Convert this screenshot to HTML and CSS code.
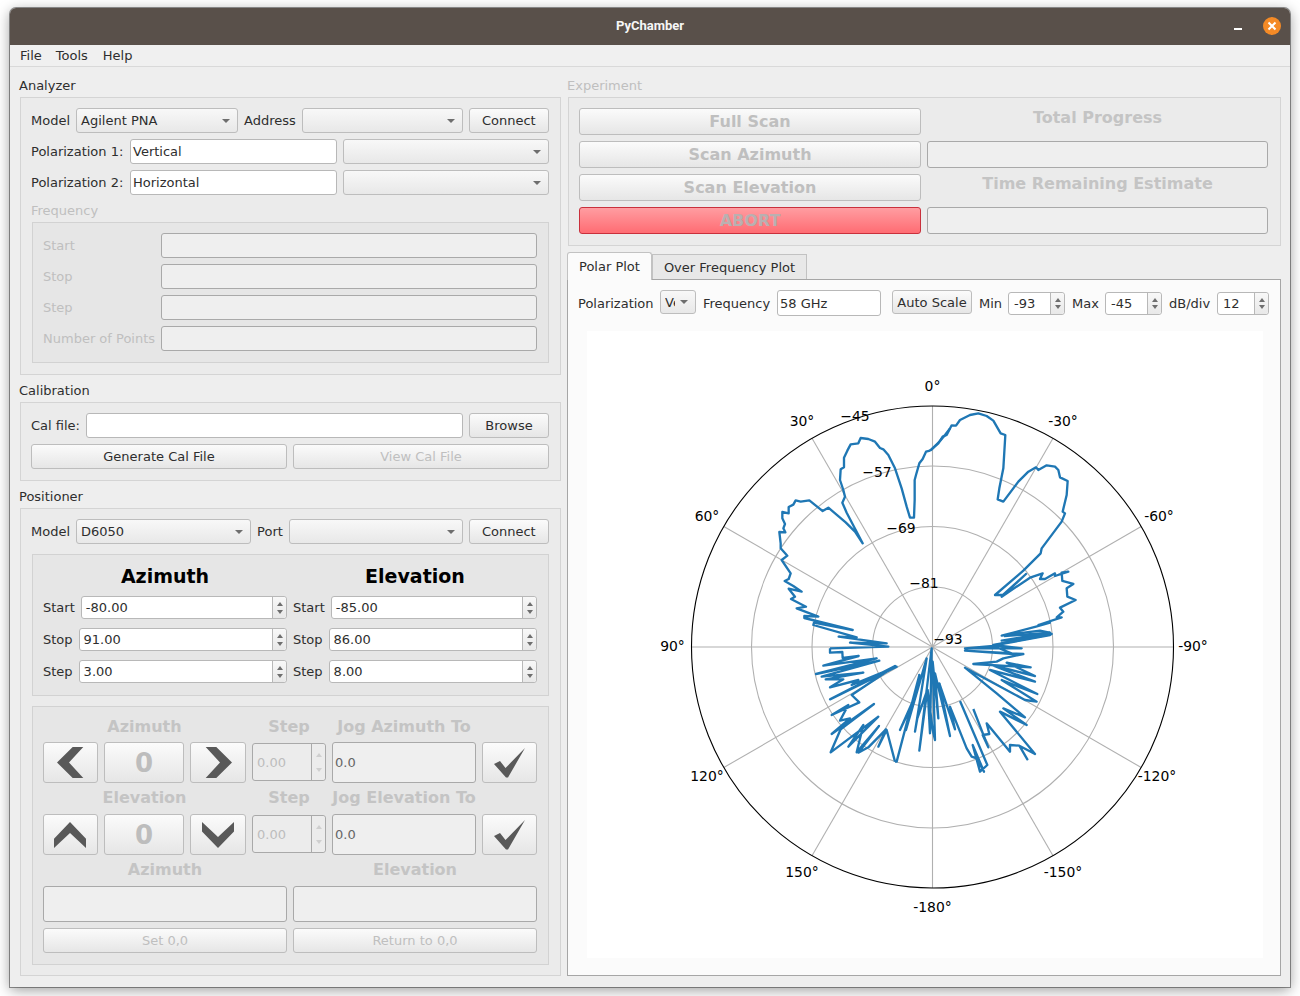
FILE: index.html
```html
<!DOCTYPE html>
<html lang="en">
<head>
    <meta charset="UTF-8">
    <title>PyChamber</title>
    <link rel="stylesheet" href="styles.css">
</head>
<body>

<div class="window">
    <div class="titlebar">
        <span class="title">PyChamber</span>
        <span class="minimize"></span>
        <span class="close">
            <svg width="10" height="10" viewBox="0 0 10 10"><path d="M1.5 1.5L8.5 8.5M8.5 1.5L1.5 8.5" stroke="#fff" stroke-width="2"/></svg>
        </span>
    </div>
    <div class="menubar">
        <span>File</span>
        <span>Tools</span>
        <span>Help</span>
    </div>

    <div class="main">
        <!-- left column -->
        <div class="col-left">
            <div class="group-title">Analyzer</div>
            <div class="box box-analyzer">
                <div class="row">
                    <span class="lbl">Model</span>
                    <div class="combo w162">Agilent PNA<i class="arrow"></i></div>
                    <span class="lbl">Address</span>
                    <div class="combo w161"><i class="arrow"></i></div>
                    <div class="btn w80">Connect</div>
                </div>
                <div class="row">
                    <span class="lbl pol">Polarization 1:</span>
                    <div class="field w207">Vertical</div>
                    <div class="combo grow"><i class="arrow"></i></div>
                </div>
                <div class="row">
                    <span class="lbl pol">Polarization 2:</span>
                    <div class="field w207">Horizontal</div>
                    <div class="combo grow"><i class="arrow"></i></div>
                </div>
                <div class="sub-title off">Frequency</div>
                <div class="frame freq">
                    <div class="freq-row"><span class="lbl off">Start</span><div class="field dis grow"></div></div>
                    <div class="freq-row"><span class="lbl off">Stop</span><div class="field dis grow"></div></div>
                    <div class="freq-row"><span class="lbl off">Step</span><div class="field dis grow"></div></div>
                    <div class="freq-row"><span class="lbl off">Number of Points</span><div class="field dis grow"></div></div>
                </div>
            </div>

            <div class="group-title next">Calibration</div>
            <div class="box box-cal">
                <div class="row">
                    <span class="lbl">Cal file:</span>
                    <div class="field grow"></div>
                    <div class="btn w80">Browse</div>
                </div>
                <div class="row">
                    <div class="btn half">Generate Cal File</div>
                    <div class="btn half off">View Cal File</div>
                </div>
            </div>

            <div class="group-title next">Positioner</div>
            <div class="box box-pos">
                <div class="row">
                    <span class="lbl">Model</span>
                    <div class="combo w175">D6050<i class="arrow"></i></div>
                    <span class="lbl">Port</span>
                    <div class="combo w174"><i class="arrow"></i></div>
                    <div class="btn w80">Connect</div>
                </div>

                <div class="frame scan">
                    <div class="scan-grid">
                        <div class="axis-title">Azimuth</div>
                        <div class="axis-title">Elevation</div>
                        <div class="spin-row"><span class="lbl">Start</span><div class="spin">-80.00<span class="spin-btns"><i class="up"></i><i class="down"></i></span></div></div>
                        <div class="spin-row"><span class="lbl">Start</span><div class="spin">-85.00<span class="spin-btns"><i class="up"></i><i class="down"></i></span></div></div>
                        <div class="spin-row"><span class="lbl">Stop</span><div class="spin">91.00<span class="spin-btns"><i class="up"></i><i class="down"></i></span></div></div>
                        <div class="spin-row"><span class="lbl">Stop</span><div class="spin">86.00<span class="spin-btns"><i class="up"></i><i class="down"></i></span></div></div>
                        <div class="spin-row"><span class="lbl">Step</span><div class="spin">3.00<span class="spin-btns"><i class="up"></i><i class="down"></i></span></div></div>
                        <div class="spin-row"><span class="lbl">Step</span><div class="spin">8.00<span class="spin-btns"><i class="up"></i><i class="down"></i></span></div></div>
                    </div>
                </div>

                <div class="frame jog">
                    <div class="jog-grid">
                        <div class="jog-lbl span3">Azimuth</div>
                        <div class="jog-lbl">Step</div>
                        <div class="jog-lbl span2">Jog Azimuth To</div>

                        <div class="btn icon nudge"><svg width="27" height="31" viewBox="0 0 27 31"><polygon points="15.7,0 26.3,0 12,15.5 26.3,31 15.7,31 0,15.5"/></svg></div>
                        <div class="btn big">0</div>
                        <div class="btn icon"><svg width="27" height="31" viewBox="0 0 27 31"><polygon points="0.7,0 11.3,0 27,15.5 11.3,31 0.7,31 15,15.5"/></svg></div>
                        <div class="spin dis">0.00<span class="spin-btns"><i class="up"></i><i class="down"></i></span></div>
                        <div class="field dis jog-to">0.0</div>
                        <div class="btn icon nudge"><svg width="31" height="30" viewBox="0 0 31 30"><polygon points="0,16 6,13 11.5,20 31,0 14,29.5 12,29.5"/></svg></div>

                        <div class="jog-lbl span3">Elevation</div>
                        <div class="jog-lbl">Step</div>
                        <div class="jog-lbl span2">Jog Elevation To</div>

                        <div class="btn icon nudge"><svg width="32" height="26" viewBox="0 0 32 26"><polygon points="16,0 32,16.7 32,26 16,11 0,26 0,16.7"/></svg></div>
                        <div class="btn big">0</div>
                        <div class="btn icon"><svg width="32" height="26" viewBox="0 0 32 26"><polygon points="0,0 16,15 32,0 32,9.5 16,26 0,9.5"/></svg></div>
                        <div class="spin dis">0.00<span class="spin-btns"><i class="up"></i><i class="down"></i></span></div>
                        <div class="field dis jog-to">0.0</div>
                        <div class="btn icon nudge"><svg width="31" height="30" viewBox="0 0 31 30"><polygon points="0,16 6,13 11.5,20 31,0 14,29.5 12,29.5"/></svg></div>
                    </div>
                    <div class="pos-grid">
                        <div class="jog-lbl">Azimuth</div>
                        <div class="jog-lbl">Elevation</div>
                        <div class="field dis readout"></div>
                        <div class="field dis readout"></div>
                        <div class="btn off">Set 0,0</div>
                        <div class="btn off">Return to 0,0</div>
                    </div>
                </div>
            </div>
        </div>

        <!-- right column -->
        <div class="col-right">
            <div class="group-title off">Experiment</div>
            <div class="box box-exp">
                <div class="exp-grid">
                    <div class="btn scan-btn">Full Scan</div>
                    <div class="exp-lbl">Total Progress</div>
                    <div class="btn scan-btn">Scan Azimuth</div>
                    <div class="progress"></div>
                    <div class="btn scan-btn">Scan Elevation</div>
                    <div class="exp-lbl">Time Remaining Estimate</div>
                    <div class="btn scan-btn abort">ABORT</div>
                    <div class="progress"></div>
                </div>
            </div>

            <div class="tabs">
                <div class="tab active">Polar Plot</div>
                <div class="tab">Over Frequency Plot</div>
            </div>
            <div class="pane">
                <div class="toolbar">
                    <span class="lbl w75">Polarization</span>
                    <div class="combo pol-combo"><span class="clip">Ve</span><i class="arrow"></i></div>
                    <span class="lbl w67">Frequency</span>
                    <div class="field freq-in">58 GHz</div>
                    <div class="btn auto">Auto Scale</div>
                    <span class="lbl w22">Min</span>
                    <div class="spin small w57">-93<span class="spin-btns"><i class="up"></i><i class="down"></i></span></div>
                    <span class="lbl w26">Max</span>
                    <div class="spin small w57">-45<span class="spin-btns"><i class="up"></i><i class="down"></i></span></div>
                    <span class="lbl w41">dB/div</span>
                    <div class="spin small w52">12<span class="spin-btns"><i class="up"></i><i class="down"></i></span></div>
                </div>

                <svg class="plot" width="676" height="627" viewBox="587 331 676 627">
                    <g class="grid">
                        <circle cx="932.5" cy="647" r="60"/>
                        <circle cx="932.5" cy="647" r="120.5"/>
                        <circle cx="932.5" cy="647" r="181"/>
                        <line x1="932.5" y1="406" x2="932.5" y2="888"/>
                        <line x1="692" y1="647" x2="1173" y2="647"/>
                        <line x1="812" y1="438.3" x2="1053" y2="855.7"/>
                        <line x1="1053" y1="438.3" x2="812" y2="855.7"/>
                        <line x1="723.8" y1="526.5" x2="1141.2" y2="767.5"/>
                        <line x1="1141.2" y1="526.5" x2="723.8" y2="767.5"/>
                    </g>
                    <circle class="rim" cx="932.5" cy="647" r="241"/>

                    <g class="trace" transform="translate(780 630) scale(.33333)">
                        <polyline points="345,395 350,395 418,135 405,205 360,300 400,210 378,300 440,85 405,305 412,265 442,180 418,362 455,55 450,310 443,180 458,300 465,330 458,95 475,265 465,130 510,318 478,160 525,298 510,230 560,355 575,380 590,385 612,425 578,345 600,425 622,405 540,213"/>
                        <polyline points="580,237 625,352 608,315 628,312 620,280 690,365 690,345 718,347 742,388 718,347 765,372 660,245 740,285 670,235 735,262 650,190 555,113 735,210 770,215 665,150 772,192 630,120 765,155 635,105 765,138 680,98 752,112 580,102 650,95 670,85 730,72 555,62 700,72 640,48 555,55 725,55 640,45 815,12 665,32 810,8 672,18"/>
                        <polyline points="150,55 150,68 187,66 188,84 236,78 130,107 290,85 108,132 298,92 125,140 250,128 137,148 190,148 150,172 235,150 215,165 350,110 150,208 345,108 215,195 238,217 155,255 205,225 180,272 210,265 155,312 282,222 182,298 152,367 295,260 205,350 250,285 230,367 297,288 235,368 265,352 318,298 295,350 320,300 345,395"/>
                    </g>
                    <g class="trace" transform="translate(930 380) scale(.33333)">
                        <polyline points="188,797 360,765 215,790 358,758 330,752 215,767 318,740 360,728 325,735 395,712 380,712 400,695 390,683 437,660 412,650 410,625 430,612 397,603 395,578 415,575 375,588 375,580 345,597 330,597 338,580 300,593 215,650 288,582 218,645 195,645 280,572 332,520 335,505 395,425 405,400 398,395 410,345 413,303 390,292 385,270 375,260 350,256 325,270 318,262 295,275 265,305 220,365 203,358 208,325 220,265 226,165 212,160 190,122 170,108 145,100 120,105 90,120 78,137 65,136 50,165 38,170 25,190 0,212"/>
                    </g>
                    <g class="trace" transform="translate(680 380) scale(.33333)">
                        <polyline points="750,212 738,215 728,237 718,250 708,285 704,300 704,360 702,413 690,413 680,380 665,325 645,265 625,225 610,208 600,204 585,185 565,177 542,174 535,190 512,193 502,212 492,233 492,262 482,268 480,300 490,330 495,350 487,368 500,398 548,490 525,455 497,427 445,383 428,393 415,383 388,361 362,365 347,361 340,374 326,381 326,400 307,396 307,415 315,432 310,445 316,457 298,456 302,490 302,505 322,527 305,540 332,580 326,597 314,603 340,618 365,635 326,626 345,650 333,657 378,680 350,685 415,710 373,708 373,714 518,750 402,728 400,735 530,772 476,770 620,790 510,788 625,800 450,805"/>
                        <polyline points="810,145 795,165 780,183 755,208 750,212"/>
                    </g>

                    <g class="ticks">
                        <text x="932.5" y="391">0°</text>
                        <text x="802" y="426">30°</text>
                        <text x="1063" y="426">-30°</text>
                        <text x="707" y="521">60°</text>
                        <text x="1159" y="521">-60°</text>
                        <text x="672.5" y="651">90°</text>
                        <text x="1193" y="651">-90°</text>
                        <text x="707" y="781">120°</text>
                        <text x="1157" y="781">-120°</text>
                        <text x="802" y="877">150°</text>
                        <text x="1063" y="877">-150°</text>
                        <text x="932.5" y="912">-180°</text>
                        <text x="855" y="421">−45</text>
                        <text x="877" y="477">−57</text>
                        <text x="901" y="533">−69</text>
                        <text x="924" y="588">−81</text>
                        <text x="948" y="644">−93</text>
                    </g>
                </svg>
            </div>
        </div>
    </div>
</div>

</body>
</html>
```

FILE: styles.css
```css
/* general */
* {
    box-sizing: border-box;
}

html {
    height: 996px;
}

body {
    margin: 0;
    height: 996px;
    padding-top: 8px;
    background-color: #fff;
    font-family: "DejaVu Sans", sans-serif;
    font-size: 13px;
    color: #2e2e2e;
    overflow: hidden;
}

.window {
    width: 1280px;
    height: 979px;
    margin: 0 10px;
    background-color: #eeeeee;
    border-radius: 6px 6px 0 0;
    box-shadow: 0 0 0 1px rgba(60, 60, 60, 0.55), 0 3px 14px rgba(0, 0, 0, 0.4);
}

.titlebar {
    height: 37px;
    padding-bottom: 2px;
    background-color: #59504a;
    border-radius: 6px 6px 0 0;
    display: flex;
    justify-content: center;
    align-items: center;
    position: relative;
}

.title {
    font-family: Roboto, sans-serif;
    font-weight: 700;
    font-size: 13px;
    color: #f6f6f6;
}

.minimize {
    position: absolute;
    left: 1224px;
    top: 20px;
    width: 8px;
    height: 2px;
    background-color: #fff;
}

.close {
    position: absolute;
    left: 1253px;
    top: 9px;
    width: 18px;
    height: 18px;
    border-radius: 50%;
    background-color: #f48a26;
    display: flex;
    justify-content: center;
    align-items: center;
}

.menubar {
    height: 22px;
    padding-left: 10px;
    display: flex;
    align-items: center;
    gap: 14px;
    background-color: #f0f0f0;
    border-bottom: 1px solid #d9d9d9;
}

.menubar span:last-child {
    margin-left: 1px;
}

.main {
    display: flex;
    gap: 6px;
    padding-left: 9px;
}

.col-left {
    width: 542px;
}

.col-right {
    width: 714px;
}

/* group boxes */
.group-title {
    height: 14px;
    line-height: 14px;
    margin: 12px 0 4px;
}

.group-title.next {
    margin-top: 9px;
    margin-bottom: 4px;
}

.off {
    color: #bfbfbf;
}

.box {
    background-color: #ebebeb;
    border: 1px solid #d4d4d4;
    padding: 10px 11px 0 10px;
    margin-left: 1px;
}

.box-analyzer {
    height: 278px;
}

.box-cal {
    height: 79px;
}

.box-pos {
    height: 468px;
}

.box-exp {
    height: 149px;
    padding-right: 12px;
    margin-left: 1px;
}

.frame {
    background-color: #e6e6e6;
    border: 1px solid #d2d2d2;
    margin-left: 1px;
}

.row {
    display: flex;
    align-items: center;
    gap: 6px;
    height: 25px;
    margin-bottom: 6px;
}

.lbl {
    white-space: nowrap;
}

.lbl.pol {
    width: 93px;
}

.grow {
    flex: 1;
}

.w80 { width: 80px; }
.w162 { width: 162px; }
.w161 { width: 161px; }
.w175 { width: 175px; }
.w174 { width: 174px; }
.w207 { width: 207px; }
.w57 { width: 57px; }
.w52 { width: 52px; }
.w75 { width: 75px; }
.w67 { width: 67px; }
.w22 { width: 22px; }
.w26 { width: 26px; }
.w41 { width: 41px; }

/* controls */
.btn {
    height: 25px;
    display: flex;
    justify-content: center;
    align-items: center;
    background: linear-gradient(#fbfbfb, #e6e6e6);
    border: 1px solid #bdbdbd;
    border-radius: 3px;
}

.btn.half {
    flex: 1;
}

.combo {
    height: 25px;
    padding-left: 4px;
    display: flex;
    align-items: center;
    position: relative;
    background: linear-gradient(#f8f8f8, #e8e8e8);
    border: 1px solid #bdbdbd;
    border-radius: 3px;
    white-space: nowrap;
}

.arrow {
    position: absolute;
    right: 7px;
    top: 10px;
    border-left: 4px solid transparent;
    border-right: 4px solid transparent;
    border-top: 4px solid #6e6e6e;
}

.field {
    height: 25px;
    padding-left: 2px;
    display: flex;
    align-items: center;
    background-color: #fff;
    border: 1px solid #b8b8b8;
    border-radius: 3px;
    white-space: nowrap;
}

.field.dis {
    background-color: #efefef;
    border-color: #a9a9a9;
}

.spin {
    flex: 1;
    height: 23px;
    padding-left: 4px;
    display: flex;
    align-items: center;
    position: relative;
    background-color: #fff;
    border: 1px solid #b8b8b8;
    border-radius: 3px;
}

.spin-btns {
    position: absolute;
    right: 0;
    top: 0;
    bottom: 0;
    width: 14px;
    border-left: 1px solid #b8b8b8;
    background: linear-gradient(#f8f8f8, #e8e8e8);
    border-radius: 0 3px 3px 0;
    display: flex;
    flex-direction: column;
    justify-content: center;
    align-items: center;
    gap: 4px;
}

.up {
    border-left: 3.5px solid transparent;
    border-right: 3.5px solid transparent;
    border-bottom: 4px solid #6e6e6e;
}

.down {
    border-left: 3.5px solid transparent;
    border-right: 3.5px solid transparent;
    border-top: 4px solid #6e6e6e;
}

/* analyzer frequency */
.sub-title {
    height: 14px;
    line-height: 14px;
    margin: 9px 0 4px;
}

.freq {
    height: 141px;
    padding: 10px 11px 0 10px;
    display: flex;
    flex-direction: column;
    gap: 6px;
}

.freq-row {
    display: flex;
    align-items: center;
}

.freq-row .lbl {
    width: 118px;
}

/* positioner */
.scan {
    height: 142px;
    margin-top: 10px;
    padding: 11px 11px 0 10px;
}

.scan-grid {
    display: grid;
    grid-template-columns: 244px 244px;
    column-gap: 6px;
    row-gap: 9px;
    grid-template-rows: 21px 23px 23px 23px;
}

.axis-title {
    font-size: 19px;
    font-weight: bold;
    color: #000;
    text-align: center;
    line-height: 21px;
}

.spin-row {
    display: flex;
    align-items: center;
    gap: 6px;
}

.jog {
    height: 259px;
    margin-top: 10px;
    padding: 9px 11px 0 10px;
}

.jog-grid {
    display: grid;
    grid-template-columns: 55px 80px 56px 74px 144px 55px;
    grid-template-rows: 26px 45px 27px 41px;
    column-gap: 6px;
}

.jog-lbl {
    font-size: 16px;
    font-weight: bold;
    color: #c4c4c4;
    text-align: center;
    line-height: 22px;
    height: 22px;
    white-space: nowrap;
}

.span3 {
    grid-column: span 3;
}

.jog-grid .jog-lbl.span2 {
    grid-column: span 2;
    width: 144px;
}

.btn.icon,
.btn.big,
.field.jog-to {
    height: 41px;
}

.btn.big {
    font-size: 26px;
    font-weight: bold;
    color: #bdbdbd;
}

.icon svg {
    fill: #595959;
}

.nudge svg {
    margin-right: 1px;
}

.spin.dis {
    height: 38px;
    margin-top: 1px;
    color: #bdbdbd;
    background-color: #ececec;
    border-color: #a9a9a9;
}

.field.jog-to {
    color: #666;
}

.spin.dis .spin-btns {
    background: #ececec;
    gap: 11px;
    border-color: #a9a9a9;
}

.spin.dis .up {
    border-bottom-color: #cfcfcf;
}

.spin.dis .down {
    border-top-color: #cfcfcf;
}

.pos-grid {
    display: grid;
    grid-template-columns: 244px 244px;
    grid-template-rows: 27px 42px 25px;
    column-gap: 6px;
    margin-top: 4px;
}

.field.readout {
    height: 36px;
}

/* experiment */
.exp-grid {
    display: grid;
    grid-template-columns: 342px 341px;
    column-gap: 6px;
    row-gap: 6px;
    grid-auto-rows: 27px;
}

.btn.scan-btn {
    height: 27px;
    font-size: 16px;
    font-weight: bold;
    color: #bfbfbf;
}

.btn.abort {
    background: linear-gradient(#ff9da1, #ff6c73);
    border-color: #c9303c;
    color: #b9b0b1;
}

.exp-lbl {
    font-size: 16px;
    font-weight: bold;
    color: #c4c4c4;
    text-align: center;
    line-height: 20px;
}

.progress {
    background-color: #efefef;
    border: 1px solid #a9a9a9;
    border-radius: 3px;
}

/* tabs */
.tabs {
    display: flex;
    align-items: flex-end;
    height: 27px;
    margin-top: 6px;
}

.tab {
    height: 25px;
    padding: 0 11px;
    display: flex;
    align-items: center;
    background-color: #e8e8e8;
    border: 1px solid #c2c2c2;
    border-bottom: none;
}

.tab.active {
    height: 28px;
    margin-bottom: -1px;
    background-color: #fbfbfb;
    border-color: #c2c2c2;
    border-radius: 3px 3px 0 0;
    position: relative;
}

.pane {
    height: 697px;
    background-color: #fbfbfb;
    border: 1px solid #a6a6a6;
    padding: 10px 0 0 10px;
}

.toolbar {
    display: flex;
    align-items: center;
    gap: 7px;
    height: 26px;
}

.toolbar .lbl {
    flex: none;
}

.toolbar .combo,
.toolbar .btn {
    height: 24px;
    align-self: flex-start;
}

.pol-combo {
    width: 36px;
}

.clip {
    width: 10px;
    overflow: hidden;
}

.pol-combo .arrow {
    right: 7px;
    top: 9px;
}

.freq-in {
    width: 104px;
    height: 26px;
    margin-right: 4px;
}

.btn.auto {
    width: 80px;
}

.spin.small {
    flex: none;
    height: 23px;
    padding-left: 5px;
}

.spin.small .spin-btns {
    gap: 3px;
}

.plot {
    display: block;
    margin: 15px 0 0 9px;
    background-color: #fff;
}

.grid {
    fill: none;
    stroke: #b0b0b0;
    stroke-width: 1.1;
}

.rim {
    fill: none;
    stroke: #000;
    stroke-width: 1.1;
}

.trace polyline {
    fill: none;
    stroke: #1f77b4;
    stroke-width: 7;
    stroke-linejoin: round;
}

.ticks text {
    font-family: "DejaVu Sans", sans-serif;
    font-size: 13.9px;
    fill: #000;
    text-anchor: middle;
}
```
